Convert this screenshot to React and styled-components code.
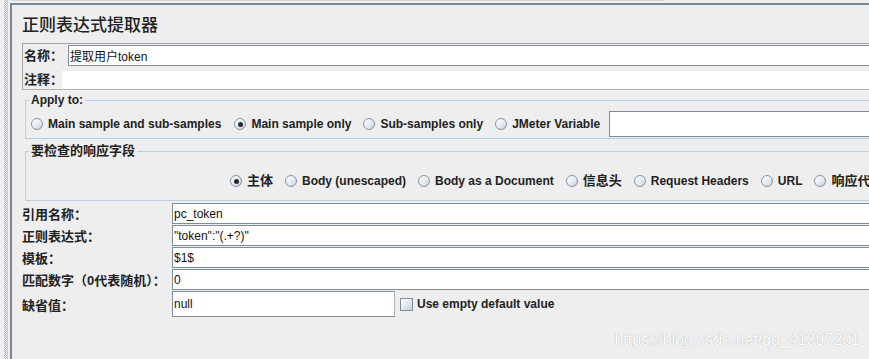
import React from 'react';
import styled, { createGlobalStyle } from 'styled-components';

const GlobalStyle = createGlobalStyle`
  html, body { margin: 0; padding: 0; background: #eeeeee; overflow: hidden; }
  body {
    font-family: "Liberation Sans", "Noto Sans CJK SC", sans-serif;
    font-size: 12px;
    color: #222222;
  }
`;

const FONT = `"Liberation Sans", "Noto Sans CJK SC", sans-serif`;

const Page = styled.div`
  position: relative;
  width: 869px;
  height: 359px;
  overflow: hidden;
  display: flex;
  background: #eeeeee;
`;

const Splitter = styled.div`
  width: 10px;
  flex-shrink: 0;
  display: flex;
`;

const Dots = styled.div`
  width: 4px;
  margin-left: 4px;
  background: conic-gradient(#b4b4b4 25%, transparent 0 50%, #b4b4b4 0 75%, transparent 0) 0 0 / 2px 2px;
`;

const Column = styled.div`
  flex-shrink: 0;
  width: 1200px;
  display: flex;
  flex-direction: column;
`;

const TopStrip = styled.div`
  height: 3px;
  display: flex;
  align-items: flex-start;
  &::before {
    content: '';
    width: 651px;
    height: 1px;
    margin-left: 2px;
    background: #d6d6d6;
  }
`;

const Panel = styled.div`
  flex: 1;
  border-top: 2px solid #7a8797;
  border-left: 2px solid #7a8797;
  padding-left: 10px;
  display: flex;
  flex-direction: column;
`;

const Title = styled.h1`
  margin: 9px 0 0 0;
  font-family: ${FONT};
  font-size: 17px;
  font-weight: 500;
  line-height: 24px;
  color: #222;
`;

const NameBox = styled.div`
  margin-top: 5px;
  border: 1px solid #a3a3a3;
  border-bottom-color: #b3b3b3;
  display: flex;
  flex-direction: column;
`;

const NameRow = styled.div`
  display: flex;
  align-items: center;
  padding-top: 1px;
`;

const CommentRow = styled.div`
  display: flex;
  align-items: center;
  margin-top: 5px;
  height: 18px;
`;

const BoxLabel = styled.span`
  width: ${p => p.$w}px;
  flex-shrink: 0;
  padding-left: 1px;
  box-sizing: border-box;
  font-size: 13px;
  font-weight: bold;
  line-height: 16px;
  white-space: nowrap;
`;

const TextField = styled.input`
  flex: ${p => (p.$w ? '0 0 auto' : '1')};
  width: ${p => (p.$w ? `${p.$w}px` : 'auto')};
  min-width: 0;
  height: ${p => p.$h || 21}px;
  box-sizing: border-box;
  margin: 0;
  border: 1px solid #7f8c9b;
  border-right-color: #a9b3bd;
  background: #ffffff;
  padding: 0 1px;
  font-family: ${FONT};
  font-size: 12px;
  color: #111;
  outline: none;
`;

const CommentArea = styled.div`
  flex: 1;
  align-self: stretch;
  background: #ffffff;
`;

const Group = styled.fieldset`
  margin: ${p => p.$mt}px 0 0 3px;
  padding: ${p => p.$pad};
  border: 1px solid #b8cfe6;
  min-width: 0;
`;

const Legend = styled.legend`
  margin-left: 3px;
  padding: 0 2px;
  font-family: ${FONT};
  font-size: ${p => (p.$cjk ? 13 : 12)}px;
  font-weight: bold;
  line-height: 14px;
  color: #222;
`;

const RadioRow = styled.div`
  display: flex;
  align-items: center;
  height: ${p => p.$h}px;
  padding-left: ${p => p.$indent}px;
  white-space: nowrap;
`;

const RadioItem = styled.label`
  display: flex;
  align-items: center;
  gap: 5px;
  margin-right: ${p => p.$gap ?? 12}px;
  font-size: ${p => (p.$cjk ? 13 : 12)}px;
  font-weight: bold;
  line-height: 16px;
  color: #222;
`;

const RadioDot = styled.span`
  width: 12px;
  height: 12px;
  flex-shrink: 0;
  box-sizing: border-box;
  border-radius: 50%;
  border: 1px solid #8494a6;
  background: linear-gradient(135deg, #ffffff 0%, #e6ebf1 55%, #c3cfdb 100%);
  display: grid;
  place-items: center;
  &::after {
    content: '';
    width: 5px;
    height: 5px;
    border-radius: 50%;
    background: ${p => (p.$on ? '#2b2b2b' : 'transparent')};
  }
`;

const FormGrid = styled.div`
  margin-top: 2px;
  display: grid;
  grid-template-columns: 150px 1fr;
  grid-template-rows: 21px 21px 21px 21px 26px;
  row-gap: 1px;
`;

const FormLabel = styled.span`
  display: flex;
  align-items: center;
  font-size: 13px;
  font-weight: bold;
  white-space: nowrap;
  color: #222;
`;

const FieldCell = styled.div`
  display: flex;
  align-items: stretch;
  min-width: 0;
`;

const CheckWrap = styled.label`
  display: flex;
  align-items: center;
  gap: 4px;
  margin-left: 5px;
  font-size: 12px;
  font-weight: bold;
  color: #222;
  white-space: nowrap;
`;

const CheckBox = styled.span`
  width: 13px;
  height: 13px;
  box-sizing: border-box;
  border: 1px solid #7f8c9b;
  background: linear-gradient(135deg, #ffffff 0%, #e4e9ef 50%, #c5d0dc 100%);
`;

const Watermark = styled.div`
  position: absolute;
  right: 9px;
  top: 331px;
  font-family: "Liberation Sans", sans-serif;
  font-size: 16px;
  line-height: 18px;
  color: #ffffff;
  text-shadow: 0 0 1px rgba(60, 60, 60, 0.45);
  pointer-events: none;
`;

const Radio = ({ on, cjk, gap, children }) => (
  <RadioItem $cjk={cjk} $gap={gap}>
    <RadioDot $on={on} />
    {children}
  </RadioItem>
);

const fields = [
  { label: '引用名称：', value: 'pc_token' },
  { label: '正则表达式：', value: '"token":"(.+?)"' },
  { label: '模板：', value: '$1$' },
  { label: '匹配数字（0代表随机）：', value: '0' },
];

export default function App() {
  return (
    <Page>
      <GlobalStyle />
      <Splitter>
        <Dots />
      </Splitter>
      <Column>
        <TopStrip />
        <Panel>
          <Title>正则表达式提取器</Title>
          <NameBox>
            <NameRow>
              <BoxLabel $w={45}>名称：</BoxLabel>
              <TextField readOnly value="提取用户token" />
            </NameRow>
            <CommentRow>
              <BoxLabel $w={39}>注释：</BoxLabel>
              <CommentArea />
            </CommentRow>
          </NameBox>

          <Group $mt={3} $pad="4px 0 1px 0">
            <Legend>Apply to:</Legend>
            <RadioRow $h={26} $indent={5}>
              <Radio gap={13}>Main sample and sub-samples</Radio>
              <Radio on>Main sample only</Radio>
              <Radio>Sub-samples only</Radio>
              <Radio gap={9}>JMeter Variable</Radio>
              <TextField $h={26} readOnly value="" />
            </RadioRow>
          </Group>

          <Group $mt={5} $pad="15px 0 11px 0">
            <Legend $cjk>要检查的响应字段</Legend>
            <RadioRow $h={16} $indent={204}>
              <Radio on cjk>主体</Radio>
              <Radio>Body (unescaped)</Radio>
              <Radio>Body as a Document</Radio>
              <Radio cjk>信息头</Radio>
              <Radio>Request Headers</Radio>
              <Radio>URL</Radio>
              <Radio cjk>响应代码</Radio>
            </RadioRow>
          </Group>

          <FormGrid>
            {fields.map(f => (
              <React.Fragment key={f.label}>
                <FormLabel>{f.label}</FormLabel>
                <FieldCell>
                  <TextField readOnly value={f.value} />
                </FieldCell>
              </React.Fragment>
            ))}
            <FormLabel>缺省值：</FormLabel>
            <FieldCell>
              <TextField $w={223} $h={26} readOnly value="null" />
              <CheckWrap>
                <CheckBox />
                Use empty default value
              </CheckWrap>
            </FieldCell>
          </FormGrid>
        </Panel>
      </Column>
      <Watermark>https://blog.csdn.net/qq_41397201</Watermark>
    </Page>
  );
}
